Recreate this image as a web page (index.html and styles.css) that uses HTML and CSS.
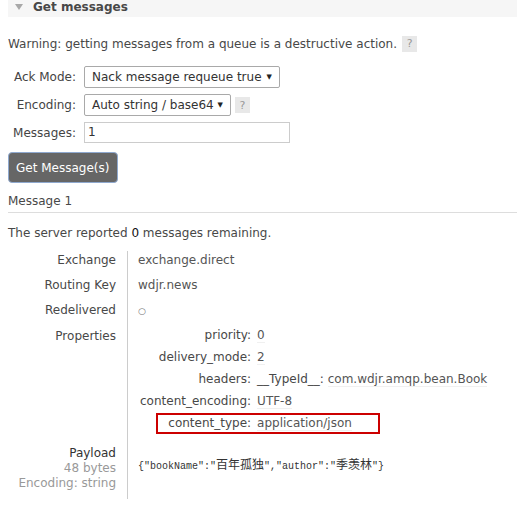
FILE: index.html
```html
<!DOCTYPE html>
<html>
<head>
<meta charset="utf-8">
<link rel="stylesheet" href="styles.css">
</head>
<body>
<div class="section">
  <h2 class="section-head"><span class="tri"></span>Get messages</h2>
  <div class="section-body">
    <p class="warn">Warning: getting messages from a queue is a destructive action. <span class="help">?</span></p>
    <div class="get-form">
      <label class="lbl">Ack Mode:</label>
      <div class="ctl"><div class="select sel-ack"><span>Nack message requeue true</span><span class="arrow">▼</span></div></div>
      <label class="lbl">Encoding:</label>
      <div class="ctl"><div class="select sel-enc"><span>Auto string / base64</span><span class="arrow">▼</span></div><span class="help help-enc">?</span></div>
      <label class="lbl">Messages:</label>
      <div class="ctl"><div class="input">1</div></div>
    </div>
    <div class="btn">Get Message(s)</div>

    <h3 class="msg-title">Message 1</h3>
    <p class="remaining">The server reported <b>0</b> messages remaining.</p>

    <div class="facts">
      <div class="fk">Exchange</div>
      <div class="fv">exchange.direct</div>
      <div class="fk">Routing Key</div>
      <div class="fv">wdjr.news</div>
      <div class="fk">Redelivered</div>
      <div class="fv"><span class="circ">○</span></div>
      <div class="fk">Properties</div>
      <div class="fv fv-props">
        <div class="props">
          <div class="pk">priority:</div><div class="pv"><span class="u">0</span></div>
          <div class="pk">delivery_mode:</div><div class="pv"><span class="u">2</span></div>
          <div class="pk">headers:</div><div class="pv"><span class="hk">__TypeId__:</span> <span class="u">com.wdjr.amqp.bean.Book</span></div>
          <div class="pk">content_encoding:</div><div class="pv"><span class="u">UTF-8</span></div>
          <div class="pk">content_type:</div><div class="pv"><span class="u">application/json</span></div>
        </div>
        <div class="mark"></div>
      </div>
      <div class="fk fk-payload">
        <div class="pl-title">Payload</div>
        <div class="pl-sub">48 bytes</div>
        <div class="pl-sub">Encoding: string</div>
      </div>
      <div class="fv fv-payload"><pre class="payload">{"bookName":"<span class="cjk">百年孤独</span>","author":"<span class="cjk">季羡林</span>"}</pre></div>
    </div>
  </div>
</div>
</body>
</html>
```
FILE: styles.css
```css
* { box-sizing: border-box; }
html, body { background: #fff; }
body {
  margin: 0;
  padding-left: 8px;
  font-family: "DejaVu Sans", Verdana, sans-serif;
  font-size: 12px;
  color: #484848;
  overflow: hidden;
}
.section-head {
  margin: 0;
  height: 17px;
  background: #f6f6f6;
  display: flex;
  align-items: flex-start;
  padding-left: 7px;
  font-size: 12px;
  line-height: 14px;
  font-weight: bold;
  color: #484848;
}
.tri {
  width: 0;
  height: 0;
  margin-top: 4px;
  margin-right: 10px;
  border-left: 4px solid transparent;
  border-right: 4px solid transparent;
  border-top: 6px solid #a8a8a8;
}
.section-body { padding: 0; }
.warn {
  margin: 18px 0 0;
  line-height: 18px;
  display: flex;
  align-items: center;
  white-space: nowrap;
}
.help {
  display: inline-flex;
  align-items: center;
  justify-content: center;
  width: 15px;
  height: 16px;
  background: #e8e8e8;
  color: #999;
  font-size: 11px;
  margin-left: 5px;
}
.get-form {
  margin-top: 13px;
  display: grid;
  grid-template-columns: 68px auto;
  column-gap: 8px;
  row-gap: 6px;
  align-items: center;
}
.lbl {
  text-align: right;
  color: #444;
  line-height: 15px;
}
.ctl { display: flex; align-items: center; height: 22px; }
.select {
  height: 22px;
  border: 1px solid #a9a9a9;
  border-radius: 2px;
  background: #fff;
  display: flex;
  align-items: center;
  justify-content: space-between;
  padding: 0 7px 0 7px;
  color: #333;
  white-space: nowrap;
}
.sel-ack { width: 196px; }
.sel-enc { width: 147px; }
.arrow { font-size: 7px; color: #222; }
.help-enc { margin-left: 4px; }
.input {
  width: 206px;
  height: 21px;
  border: 1px solid #ccc;
  padding: 0 3px;
  line-height: 19px;
  color: #333;
  margin-top: -1px;
}
.btn {
  margin-top: 8px;
  width: 110px;
  height: 31px;
  background: #666;
  color: #fff;
  border: 1px solid #8fa9cf;
  border-radius: 4px;
  display: flex;
  align-items: center;
  padding-left: 7px;
  white-space: nowrap;
}
.msg-title {
  margin: 11px 0 0;
  font-size: 12px;
  font-weight: normal;
  line-height: 15px;
  padding-bottom: 3px;
  border-bottom: 1px solid #ddd;
  color: #484848;
}
.remaining {
  margin: 13px 0 0;
  line-height: 15px;
}
.remaining b { font-weight: normal; color: #111; }
.facts {
  margin-top: 10px;
  display: grid;
  grid-template-columns: 119px 1fr;
  line-height: 15px;
}
.fk {
  text-align: right;
  padding: 2px 11px 8px 0;
  color: #484848;
}
.fv {
  border-left: 1px solid #ccc;
  padding: 2px 0 8px 10px;
  color: #555;
}
.circ { font-size: 9px; color: #777; margin-left: 0; }
.fv-props { position: relative; padding-bottom: 6px; }
.props {
  display: grid;
  grid-template-columns: max-content max-content;
  column-gap: 6px;
  margin-left: 2px;
  margin-top: -1px;
}
.pk, .pv { height: 22px; }
.pk { text-align: right; color: #484848; }
.pv { color: #555; white-space: nowrap; }
.u { border-bottom: 1px solid #f0f0f0; }
.hk { color: #484848; }
.mark {
  position: absolute;
  left: 28px;
  top: 86px;
  width: 224px;
  height: 21px;
  border: 2px solid #cc0000;
}
.pl-title { color: #333; }
.pl-sub { color: #999; }
.fv-payload { padding-top: 12px; padding-bottom: 10px; }
.payload {
  margin: 0;
  font-family: "Liberation Mono", "DejaVu Sans Mono", monospace;
  font-size: 10px;
  line-height: 15px;
  color: #333;
}
.cjk { font-family: "Noto Sans CJK SC", sans-serif; font-size: 12px; }
```
